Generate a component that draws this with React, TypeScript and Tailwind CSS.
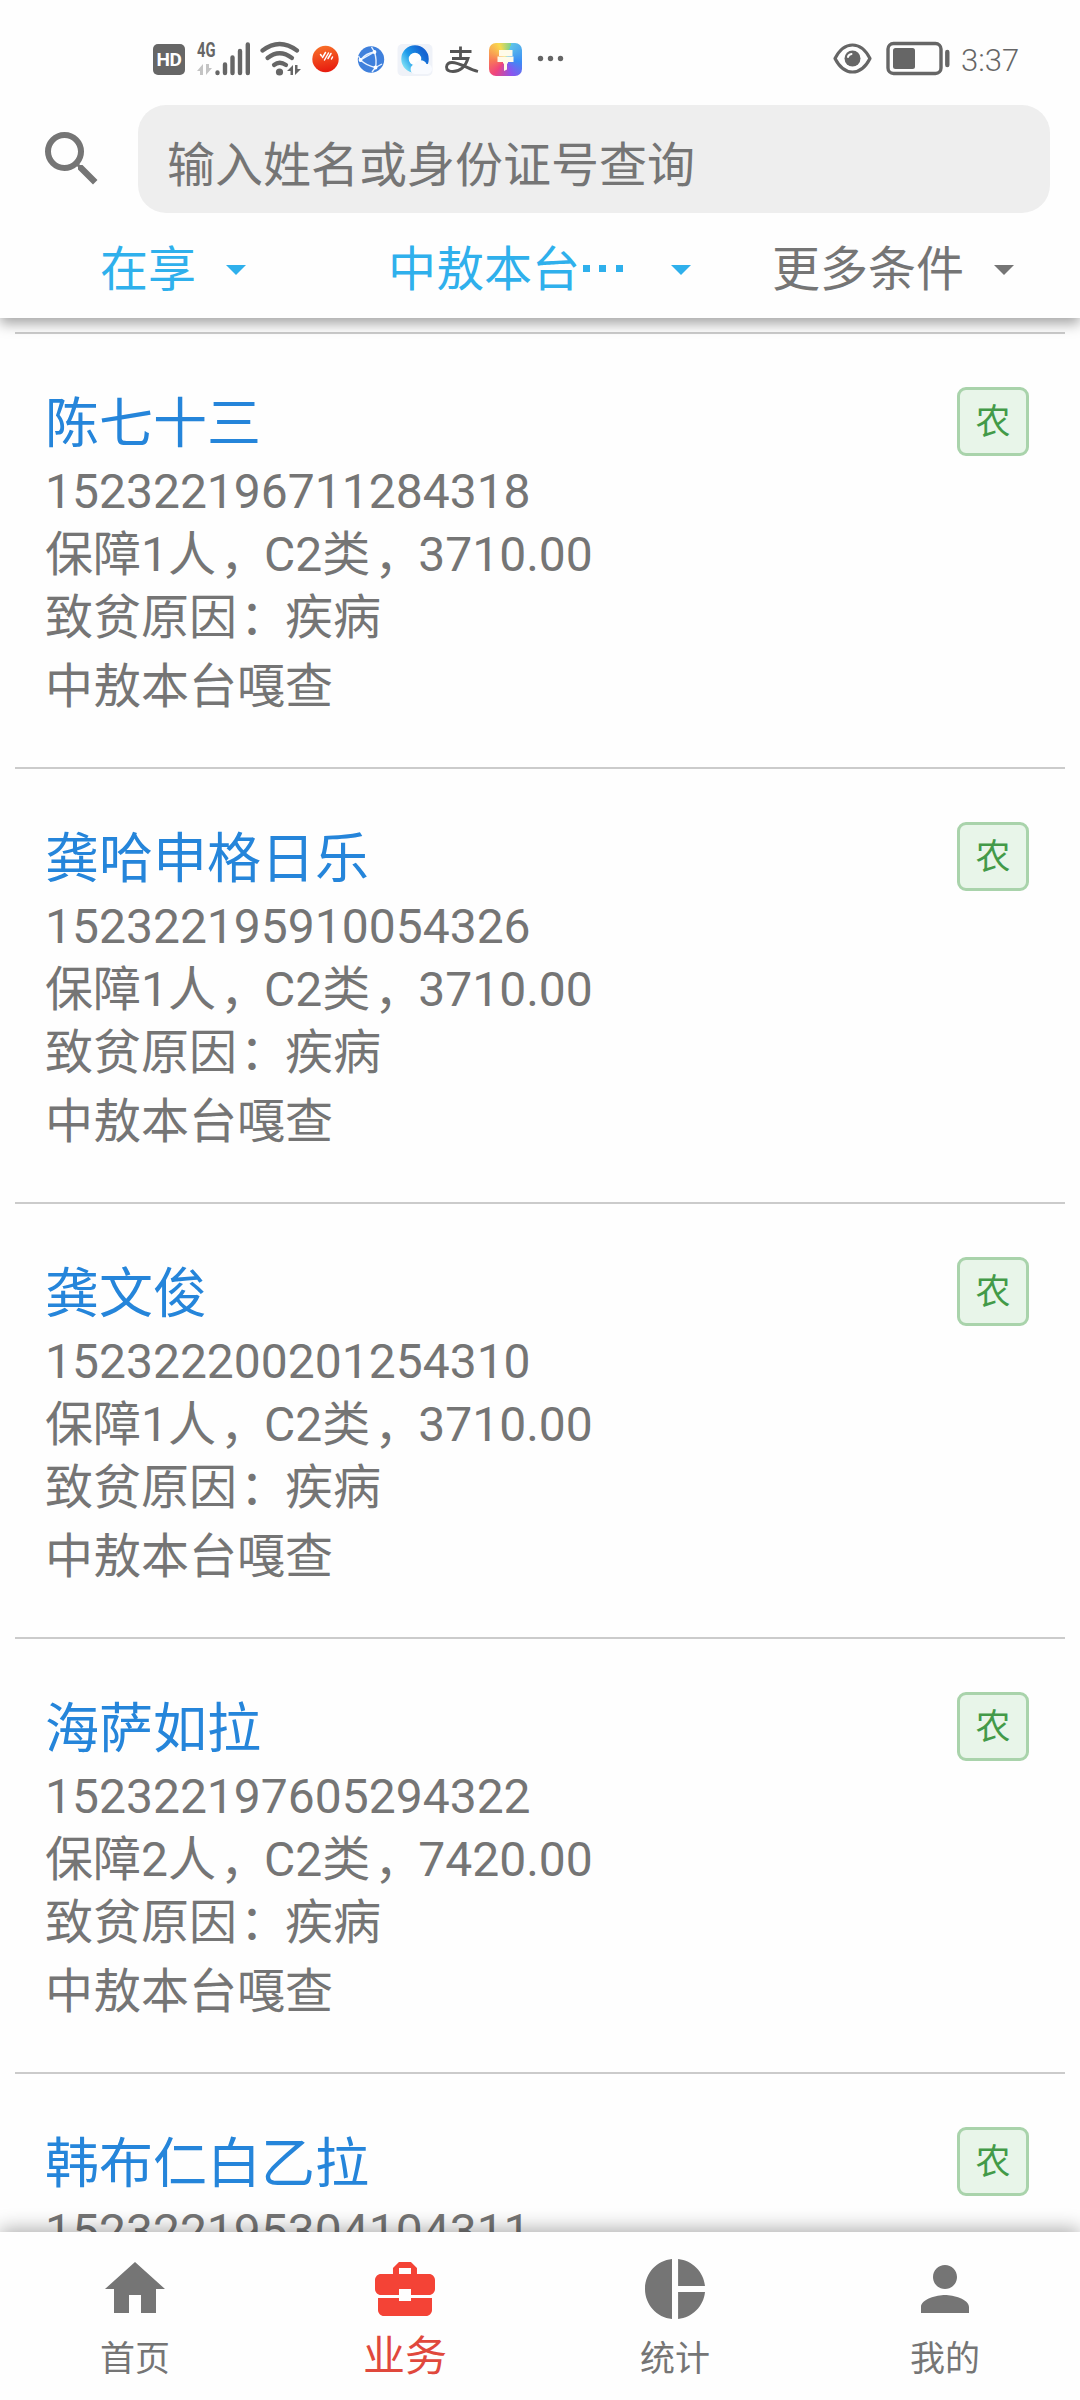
import React from "react";
import { MdSearch, MdHome, MdBusinessCenter, MdPieChart, MdPerson } from "react-icons/md";

const records = [
  { name: "陈七十三", id: "152322196711284318", info: "保障1人，C2类，3710.00" },
  { name: "龚哈申格日乐", id: "152322195910054326", info: "保障1人，C2类，3710.00" },
  { name: "龚文俊", id: "152322200201254310", info: "保障1人，C2类，3710.00" },
  { name: "海萨如拉", id: "152322197605294322", info: "保障2人，C2类，7420.00" },
  { name: "韩布仁白乙拉", id: "152322195304104311", info: "保障1人，C2类，3710.00" },
];

function StatusBar() {
  return (
    <div className="flex h-[105px] items-start pl-[153px] pt-[36px] text-[#666]">
      <div className="mt-[8px] flex h-[31px] w-[32px] items-center justify-center rounded-[5px] bg-[#666] font-['Roboto'] text-[19px] font-bold leading-none tracking-[-0.5px] text-white">
        HD
      </div>
      {/* mobile signal */}
      <svg className="ml-[11px]" width="56" height="45" viewBox="196 36 56 45">
        <text x="197" y="57" fontSize="20" fontWeight="700" fontFamily="Roboto" fill="#666" textLength="18.500" lengthAdjust="spacingAndGlyphs">4G</text>
        <path d="M197 71l6-7v11h-3v-4zM212 68l-6 7V64h3v4z" fill="#c4c4c4" />
        <g stroke="#666" strokeWidth="4.400" strokeLinecap="round">
          <path d="M217.500 72.500v0.500M225 64.500v8.500M232.500 57.500v15.500M240 51v22M247.800 44.500v28.500" />
        </g>
      </svg>
      {/* wifi */}
      <svg className="ml-[8px]" width="44" height="45" viewBox="260 36 44 45">
        <g fill="none" stroke="#666" strokeWidth="4.200" strokeLinecap="round">
          <path d="M262.500 50.500Q279.500 37.500 297 50.500" />
          <path d="M267.500 58Q279.500 48.500 292 58" />
          <path d="M274 65Q279.500 60.500 286 65" />
        </g>
        <circle cx="279.500" cy="72" r="3.600" fill="#666" />
        <path d="M287 71l6-6v10h-2.500v-4zM301 69l-6 6V65h2.500v4z" fill="#666" />
      </svg>
      <svg className="ml-[8px]" width="27" height="45" viewBox="312 36 27 45">
        <defs>
          <linearGradient id="orb" x1="0" y1="0" x2="0.2" y2="1">
            <stop offset="0" stopColor="#f9752a" />
            <stop offset="1" stopColor="#e81f10" />
          </linearGradient>
        </defs>
        <circle cx="325.500" cy="59" r="13.200" fill="url(#orb)" />
        <path d="M320.500 54.500l1 1.500M325.500 52.500l-3 5M328.500 53l-4 7M331 53.500l-3 5M332.500 57l-1 2" stroke="#fff" strokeWidth="1.500" strokeLinecap="round" />
      </svg>
      <svg className="ml-[18px]" width="28" height="45" viewBox="357 36 28 45">
        <circle cx="371" cy="59.500" r="13.200" fill="#3f80dc" />
        <g fill="none" stroke="#e6f0ff" strokeWidth="1.400">
          <path d="M374.500 52Q366 53 360.500 60Q367 66 375.500 67.500Q377 60 374.500 52M360.500 60L374.500 52M374.500 52L371.500 47M375.500 67.500L382 64M360.500 60L358.500 56M375.500 67.500L372 72" />
        </g>
        <g fill="#fff">
          <circle cx="374.500" cy="52" r="1.900" />
          <circle cx="360.500" cy="60" r="1.900" />
          <circle cx="375.500" cy="67.500" r="1.900" />
        </g>
      </svg>
      <svg className="ml-[12px]" width="36" height="45" viewBox="397 36 36 45">
        <defs>
          <linearGradient id="ring" x1="0" y1="1" x2="1" y2="0.300">
            <stop offset="0" stopColor="#7fe0f5" />
            <stop offset="0.450" stopColor="#1d9bea" />
            <stop offset="1" stopColor="#1464d2" />
          </linearGradient>
        </defs>
        <rect x="397.500" y="44" width="35" height="32" rx="5" fill="#eff2f8" />
        <circle cx="415" cy="59" r="10" fill="#fff" stroke="url(#ring)" strokeWidth="7.500" />
        <path d="M415 74a4.800 4.800 0 0 1-.5-9.500 6.500 6.500 0 0 1 12-.5 5 5 0 0 1 1 10z" fill="#f9fbff" />
      </svg>
      <svg className="ml-[11px]" width="36" height="45" viewBox="444 36 36 45">
        <g fill="none" stroke="#555" strokeWidth="2.800">
          <path d="M450 51.500H471.500M460.500 46.500v11.500M452 58.500H468Q464 71 453 71.500Q446.500 71.500 446.500 67Q447 62.500 452 62.500C460 62.500 468 69 478 71.500" />
        </g>
      </svg>
      <div className="ml-[9px] mt-[7px] flex h-[33px] w-[33px] items-center justify-center rounded-[7px] bg-[conic-gradient(from_20deg,#5fc4e8,#3b8cf5_22%,#8a55ee_38%,#f0447c_55%,#f87858_68%,#f9d94d_88%,#7fd28d)]">
        <svg width="20" height="26" viewBox="0 0 20 26">
          <path d="M3 3h13.500v6H3zM1.500 9.500h16v5.500h-5.500v1.500h-1v6l-3 1.500v-7.500H7V15H1.500z" fill="#fffbe9" />
        </svg>
      </div>
      <svg className="ml-[15px]" width="28" height="45" viewBox="537 36 28 45" fill="#666">
        <circle cx="540.500" cy="58.500" r="2.700" />
        <circle cx="550.500" cy="58.500" r="2.700" />
        <circle cx="560.500" cy="58.500" r="2.700" />
      </svg>
      {/* eye comfort */}
      <svg className="ml-[267px]" width="42" height="45" viewBox="832 36 42 45">
        <path d="M835 58.500Q842 45 852.500 45T870 58.500Q863 72 852.500 72T835 58.500Z" fill="none" stroke="#666" strokeWidth="3.200" strokeLinejoin="round" />
        <circle cx="852.500" cy="58.500" r="8" fill="#666" />
        <path d="M848 57Q848.500 54.500 851.500 54" stroke="#fff" strokeWidth="2" fill="none" strokeLinecap="round" />
      </svg>
      {/* battery */}
      <svg className="ml-[12px]" width="65" height="45" viewBox="886 36 65 45">
        <rect x="888" y="43.500" width="53" height="30" rx="5.500" fill="none" stroke="#666" strokeWidth="3.400" />
        <rect x="893" y="48" width="22" height="21" rx="2.500" fill="#666" />
        <path d="M947.300 52v13" stroke="#666" strokeWidth="4.400" strokeLinecap="round" />
      </svg>
      <span className="ml-[10px] mt-[9px] font-['Roboto'] text-[31px] font-light leading-[32px]">3:37</span>
    </div>
  );
}

function Caret({ className }: { className: string }) {
  return (
    <svg className={className} width="20" height="10" viewBox="0 0 20 10" fill="currentColor">
      <path d="M0 0h20L10 10z" />
    </svg>
  );
}

function Header() {
  return (
    <header className="relative z-10 h-[318px] shrink-0 bg-[#fefefe] shadow-[0_6px_12px_rgba(0,0,0,0.34)]">
      <StatusBar />
      <div className="flex h-[108px]">
        <MdSearch className="ml-[36px] mt-[18px] h-[72px] w-[72px]" />
        <div className="ml-[30px] flex w-[912px] items-center rounded-[28px] bg-[#eeeeee] pl-[29px]">
          <span className="pt-[13px] leading-[48px]">输入姓名或身份证号查询</span>
        </div>
      </div>
      <div className="flex h-[105px] items-center text-[#2fb0ec]">
        <div className="ml-[100px] flex items-center pt-[9px]">
          <span className="leading-[48px]">在享</span>
          <Caret className="ml-[30px]" />
        </div>
        <div className="ml-[142px] flex items-center pt-[9px]">
          <span className="leading-[48px]">中敖本台</span>
          <svg className="mb-[5px] ml-[3px]" width="42" height="8" viewBox="0 0 42 8" fill="currentColor">
            <path d="M0 1h7v7H0zM16 1h7v7h-7zM33 1h7v7h-7z" />
          </svg>
          <Caret className="ml-[46px]" />
        </div>
        <div className="ml-[81px] flex items-center pt-[9px] text-[#757575]">
          <span className="leading-[48px]">更多条件</span>
          <Caret className="ml-[30px]" />
        </div>
      </div>
    </header>
  );
}

function Comma() {
  return <span className="relative left-[4px] top-[2px]">，</span>;
}

function RecordRow({ name, id, info }: { name: string; id: string; info: string }) {
  return (
    <article className="mx-[15px] flex h-[435px] shrink-0 items-start justify-between border-t-2 border-[#cbcbcb] pl-[30px] pr-[36px] pt-[53px]">
      <div className="pt-[3px]">
        <h2 className="text-[54px] leading-[70px] text-[#2585da]">{name}</h2>
        <p className="leading-[63px]">{id}</p>
        <p className="leading-[63px]">
          {info.split("，").map((part, i) => (
            <React.Fragment key={i}>
              {i > 0 && <Comma />}
              {part}
            </React.Fragment>
          ))}
        </p>
        <p className="leading-[64px]">
          致贫原因<span className="relative left-[3px]">：</span>疾病
        </p>
        <p className="mt-[5px] leading-[64px]">中敖本台嘎查</p>
      </div>
      <span className="flex h-[69px] w-[72px] items-center justify-center rounded-[9px] border-[3px] border-[#a9d3ab] bg-[#e8f5e9] pt-[1px] text-[35px] leading-none text-[#439a48]">
        农
      </span>
    </article>
  );
}

function BottomNav() {
  const icon = "h-[72px] w-[72px]";
  const tabs = [
    { label: "首页", icon: <MdHome className={icon} />, active: false },
    { label: "业务", icon: <MdBusinessCenter className={icon} />, active: true },
    { label: "统计", icon: <MdPieChart className={icon} />, active: false },
    { label: "我的", icon: <MdPerson className={icon} />, active: false },
  ];
  return (
    <nav className="relative z-10 grid h-[168px] shrink-0 grid-cols-4 bg-[#fefefe] shadow-[0_-3px_18px_rgba(0,0,0,0.32)]">
      {tabs.map((t) => (
        <div key={t.label} className={t.active ? "flex flex-col items-center pt-[21px] text-[#f44336]" : "flex flex-col items-center pt-[21px]"}>
          {t.icon}
          <span className={t.active ? "mt-[11px] text-[42px] leading-[42px] text-[#e0483c]" : "mt-[17px] text-[35px] leading-[36px]"}>{t.label}</span>
        </div>
      ))}
    </nav>
  );
}

export default function App() {
  return (
    <div className="flex h-[2400px] w-[1080px] flex-col overflow-hidden bg-[#fefefe] font-['Roboto','Noto_Sans_CJK_SC',sans-serif] text-[48px] text-[#757575]">
      <Header />
      <main className="flex min-h-0 flex-1 flex-col overflow-hidden pt-[14px]">
        {records.map((r) => (
          <RecordRow key={r.id} {...r} />
        ))}
      </main>
      <BottomNav />
    </div>
  );
}
